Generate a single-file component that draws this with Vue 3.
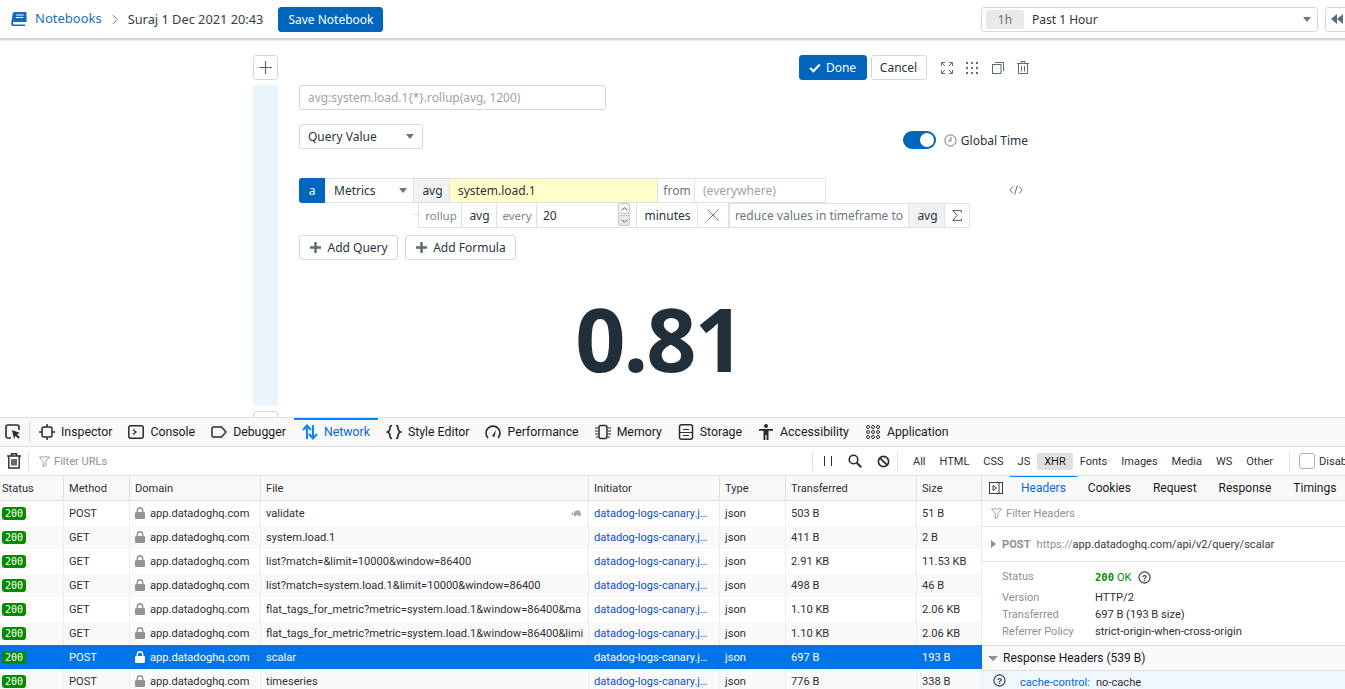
<script setup>
const tabs = [
  { name: 'Inspector', icon: 'inspector' },
  { name: 'Console', icon: 'console' },
  { name: 'Debugger', icon: 'debugger' },
  { name: 'Network', icon: 'network', active: true },
  { name: 'Style Editor', icon: 'style' },
  { name: 'Performance', icon: 'perf' },
  { name: 'Memory', icon: 'memory' },
  { name: 'Storage', icon: 'storage' },
  { name: 'Accessibility', icon: 'a11y' },
  { name: 'Application', icon: 'app' },
]
const filters = ['All', 'HTML', 'CSS', 'JS', 'XHR', 'Fonts', 'Images', 'Media', 'WS', 'Other']
const cols = ['Status', 'Method', 'Domain', 'File', 'Initiator', 'Type', 'Transferred', 'Size']
const rows = [
  { m: 'POST', f: 'validate', t: '503 B', s: '51 B', slow: true },
  { m: 'GET', f: 'system.load.1', t: '411 B', s: '2 B' },
  { m: 'GET', f: 'list?match=&limit=10000&window=86400', t: '2.91 KB', s: '11.53 KB' },
  { m: 'GET', f: 'list?match=system.load.1&limit=10000&window=86400', t: '498 B', s: '46 B' },
  { m: 'GET', f: 'flat_tags_for_metric?metric=system.load.1&window=86400&ma', t: '1.10 KB', s: '2.06 KB' },
  { m: 'GET', f: 'flat_tags_for_metric?metric=system.load.1&window=86400&limi', t: '1.10 KB', s: '2.06 KB' },
  { m: 'POST', f: 'scalar', t: '697 B', s: '193 B', sel: true },
  { m: 'POST', f: 'timeseries', t: '776 B', s: '338 B' },
]
const detailTabs = ['Headers', 'Cookies', 'Request', 'Response', 'Timings']
const facts = [
  ['Version', 'HTTP/2'],
  ['Transferred', '697 B (193 B size)'],
  ['Referrer Policy', 'strict-origin-when-cross-origin'],
]
</script>

<template>
  <div class="page">
    <header class="topbar">
      <svg class="book" viewBox="0 0 16 14" width="16" height="14"><path d="M4 0h11.500v10H3.500c-.9 0-1.400.5-1.500 1.200-.1.700.5 1.300 1.300 1.300H14V14H2.500C1 14 0 13 .2 11.400L1.600 2C1.800.8 2.800 0 4 0z" fill="#1768b8"/><path d="M5.200 3h7.500M4.800 5.500h7.500" stroke="#fff" stroke-width="1"/></svg>
      <a class="crumb">Notebooks</a>
      <svg class="chev" viewBox="0 0 8 12" width="7" height="11"><path d="M1 1l5 5-5 5" fill="none" stroke="#6b7a85" stroke-width="1.100"/></svg>
      <span class="title">Suraj 1 Dec 2021 20:43</span>
      <button class="btn primary save">Save Notebook</button>
      <div class="timepick">
        <span class="pill">1h</span>
        <span class="tp-label">Past 1 Hour</span>
        <span class="caret"></span>
      </div>
      <button class="btn rewind"><svg viewBox="0 0 14 10" width="14" height="10"><path d="M7 0v10L1 5zM13 0v10L7 5z" fill="#5d6b75"/></svg></button>
    </header>

    <main class="canvas">
      <div class="rail">
        <button class="btn square"><svg viewBox="0 0 13 13" width="13" height="13"><path d="M6.500 0v13M0 6.500h13" stroke="#5d6b75" stroke-width="1.200"/></svg></button>
        <div class="railbar"></div>
        <button class="btn square"></button>
      </div>
      <div class="cell">
        <div class="cell-actions">
          <button class="btn primary done"><svg viewBox="0 0 12 10" width="12" height="10"><path d="M1.200 5l3.200 3.200L10.800 1.500" fill="none" stroke="#fff" stroke-width="2.200"/></svg>Done</button>
          <button class="btn cancel">Cancel</button>
          <div class="tools">
            <svg viewBox="0 0 12 12" width="12" height="12"><path d="M.5 4V.5H4M1 1l3 3M8 .5h3.500V4M11 1L8 4M.5 8v3.500H4M1 11l3-3M8 11.500h3.500V8M11 11L8 8" fill="none" stroke="#5d6b75"/></svg>
            <svg viewBox="0 0 12 12" width="12" height="12" fill="#5d6b75"><rect x="0" y="0" width="2" height="2"/><rect x="5" y="0" width="2" height="2"/><rect x="10" y="0" width="2" height="2"/><rect x="0" y="5" width="2" height="2"/><rect x="5" y="5" width="2" height="2"/><rect x="10" y="5" width="2" height="2"/><rect x="0" y="10" width="2" height="2"/><rect x="5" y="10" width="2" height="2"/><rect x="10" y="10" width="2" height="2"/></svg>
            <svg viewBox="0 0 12 12" width="12" height="12"><rect x=".5" y="2.500" width="8.500" height="9" fill="none" stroke="#5d6b75"/><path d="M3 .5h8.500V9" fill="none" stroke="#5d6b75"/></svg>
            <svg viewBox="0 0 12 13" width="12" height="13"><path d="M0 2.500h12M4 2V.5h4V2M1.500 3v9.500h9V3M4.500 5v5.500M7.500 5v5.500" fill="none" stroke="#5d6b75"/></svg>
          </div>
        </div>
        <div class="query-text">avg:system.load.1{*}.rollup(avg, 1200)</div>
        <div class="viz-row">
          <div class="viz-select">Query Value<span class="caret"></span></div>
          <div class="global">
            <span class="toggle"><span class="knob"></span></span>
            <svg viewBox="0 0 14 14" width="13" height="13"><circle cx="7" cy="7" r="6" fill="none" stroke="#5d6b75"/><path d="M7.500 3.500V7.500H4.500" fill="none" stroke="#5d6b75"/></svg>
            <span>Global Time</span>
          </div>
        </div>
        <div class="q-line">
          <span class="q-a">a</span>
          <span class="q-src">Metrics<span class="caret"></span></span>
          <span class="q-avg">avg</span>
          <span class="q-metric">system.load.1</span>
          <span class="q-from">from</span>
          <span class="q-where">(everywhere)</span>
          <svg class="q-code" viewBox="0 0 14 10" width="14" height="10"><path d="M4 1.500L.8 5 4 8.500M10 1.500L13.200 5 10 8.500M8.300 .5L5.700 9.500" fill="none" stroke="#5d6b75"/></svg>
        </div>
        <div class="f-line">
          <span class="f-dash"></span>
          <span class="f-box rollup"><span class="f-key">rollup</span></span>
          <span class="f-box f-avg">avg</span>
          <span class="f-box f-every"><span class="f-key">every</span></span>
          <span class="f-box f-num">20
            <span class="spin"><i><svg viewBox="0 0 8 5" width="7" height="4"><path d="M.5 4L4 1l3.500 3" fill="none" stroke="#444"/></svg></i><i class="down"><svg viewBox="0 0 8 5" width="7" height="4"><path d="M.5 1L4 4l3.500-3" fill="none" stroke="#444"/></svg></i></span>
          </span>
          <span class="f-box f-min">minutes</span>
          <span class="f-box f-x"><svg viewBox="0 0 12 12" width="12" height="12"><path d="M.5.5l11 11M11.500.5l-11 11" stroke="#6b7a85"/></svg></span>
          <span class="f-box f-reduce">reduce values in timeframe to</span>
          <span class="f-box f-avg2">avg</span>
          <span class="f-box f-sigma"><svg viewBox="0 0 10 11" width="10" height="11"><path d="M9.500 2.500V.6H.8L5.200 5.500.8 10.400h8.700V8.500" fill="none" stroke="#4f5d67"/></svg></span>
        </div>
        <div class="add-row">
          <button class="btn add"><svg viewBox="0 0 11 11" width="11" height="11"><path d="M5.500 0v11M0 5.500h11" stroke="#5d6b75" stroke-width="2.400"/></svg>Add Query</button>
          <button class="btn add"><svg viewBox="0 0 11 11" width="11" height="11"><path d="M5.500 0v11M0 5.500h11" stroke="#5d6b75" stroke-width="2.400"/></svg>Add Formula</button>
        </div>
        <div class="big">0.81</div>
      </div>
    </main>

    <section class="devtools">
      <nav class="dt-tabs">
        <span class="picker">
          <svg viewBox="0 0 16 16" width="16" height="16"><path d="M6 14H3a2 2 0 0 1-2-2V3a2 2 0 0 1 2-2h9a2 2 0 0 1 2 2v3" fill="none" stroke="#2b2b30" stroke-width="1.600"/><path d="M7 6l8 3-3 1.300 2.800 3-1.500 1.500-2.800-3L9 15z" fill="#2b2b30"/></svg>
        </span>
        <div v-for="t in tabs" :key="t.name" class="dt-tab" :class="{ on: t.active }">
          <svg viewBox="0 0 16 16" width="16" height="16" class="dt-ico">
            <template v-if="t.icon === 'inspector'"><rect x="3" y="3" width="10" height="10" rx="2" fill="none" stroke="currentColor" stroke-width="1.500"/><path d="M8 0v3M8 13v3M0 8h3M13 8h3" stroke="currentColor" stroke-width="1.500"/></template>
            <template v-else-if="t.icon === 'console'"><rect x=".8" y="1.800" width="14.400" height="12.400" rx="2" fill="none" stroke="currentColor" stroke-width="1.500"/><path d="M5 5.500L8 8l-3 2.500" fill="none" stroke="currentColor" stroke-width="1.200"/></template>
            <template v-else-if="t.icon === 'debugger'"><path d="M2.500 3h8l4.500 5-4.500 5h-8A1.500 1.500 0 0 1 1 11.500v-7A1.500 1.500 0 0 1 2.500 3z" fill="none" stroke="currentColor" stroke-width="1.500"/></template>
            <template v-else-if="t.icon === 'network'"><path d="M5 15V2M1 6l4-4.500L9 6M11 1v13M7 10l4 4.500 4-4.500" fill="none" stroke="#0a84ff" stroke-width="2"/></template>
            <template v-else-if="t.icon === 'style'"><path d="M6 1.500c-2 0-2 1-2 2.500s0 3-2.500 4C4 9 4 10.500 4 12s0 2.500 2 2.500M10 1.500c2 0 2 1 2 2.500s0 3 2.500 4C12 9 12 10.500 12 12s0 2.500-2 2.500" fill="none" stroke="currentColor" stroke-width="1.600"/></template>
            <template v-else-if="t.icon === 'perf'"><path d="M3 14A7 7 0 1 1 13 14" fill="none" stroke="currentColor" stroke-width="1.600"/><path d="M7 12l4-6-1.500 7z" fill="currentColor"/></template>
            <template v-else-if="t.icon === 'memory'"><rect x="4" y="1.500" width="8" height="13" rx="2" fill="none" stroke="currentColor" stroke-width="1.500"/><path d="M0 4h3M0 7h3M0 10h3M1 13h2M13 4h3M13 7h3M13 10h3M13 13h2" stroke="currentColor"/></template>
            <template v-else-if="t.icon === 'storage'"><rect x="1.500" y=".8" width="13" height="14.400" rx="2" fill="none" stroke="currentColor" stroke-width="1.500"/><path d="M5 5.500h6M1.500 8.500h13M5 11.500h6" stroke="currentColor" stroke-width="1.200"/></template>
            <template v-else-if="t.icon === 'a11y'"><circle cx="8" cy="2" r="2" fill="currentColor"/><path d="M1 5h14v1.800h-4.500V16H8.600v-5H7.400v5H5.500V6.800H1z" fill="currentColor"/></template>
            <template v-else><g fill="none" stroke="currentColor"><circle cx="3" cy="3" r="1.500"/><circle cx="8" cy="3" r="1.500"/><circle cx="13" cy="3" r="1.500"/><circle cx="3" cy="8" r="1.500"/><circle cx="8" cy="8" r="1.500"/><circle cx="13" cy="8" r="1.500"/><circle cx="3" cy="13" r="1.500"/><circle cx="8" cy="13" r="1.500"/><circle cx="13" cy="13" r="1.500"/></g></template>
          </svg>
          <span>{{ t.name }}</span>
        </div>
      </nav>

      <div class="dt-filter">
        <span class="trash">
          <svg viewBox="0 0 14 16" width="14" height="16"><path d="M0 3h14M4.500 2.500V.8h5v1.700M1.800 3.500V15h10.400V3.500M5 6v6.500M7 6v6.500M9 6v6.500" fill="none" stroke="#2b2b30" stroke-width="1.400"/></svg>
        </span>
        <div class="url-filter">
          <svg viewBox="0 0 12 12" width="11" height="11"><path d="M.5 1h11L7.500 6v4.500l-3 1V6z" fill="none" stroke="#9a9aa0"/></svg>
          <span>Filter URLs</span>
        </div>
        <div class="dt-actions">
          <svg viewBox="0 0 10 10" width="10" height="10"><path d="M1.500 0v10M8.500 0v10" stroke="#2b2b30"/></svg>
          <svg viewBox="0 0 14 14" width="14" height="14"><circle cx="5.500" cy="5.500" r="4.300" fill="none" stroke="#2b2b30" stroke-width="1.600"/><path d="M8.800 8.800L13.200 13.200" stroke="#2b2b30" stroke-width="2"/></svg>
          <svg viewBox="0 0 14 14" width="13" height="13"><circle cx="7" cy="7" r="5.500" fill="none" stroke="#2b2b30" stroke-width="1.800"/><path d="M3 3l8 8" stroke="#2b2b30" stroke-width="1.800"/></svg>
        </div>
        <div class="types">
          <span v-for="f in filters" :key="f" class="type" :class="{ on: f === 'XHR' }">{{ f }}</span>
        </div>
        <div class="persist"><span class="check"></span><span>Disab</span></div>
      </div>

      <div class="dt-body">
        <div class="table">
          <div class="tr head">
            <div v-for="c in cols" :key="c" class="td">{{ c }}</div>
          </div>
          <div v-for="(r, i) in rows" :key="i" class="tr" :class="{ alt: i % 2 === 1, sel: r.sel }">
            <div class="td status"><span class="code">200</span></div>
            <div class="td">{{ r.m }}</div>
            <div class="td dom">
              <svg viewBox="0 0 10 12" width="10" height="12"><path d="M2.300 5.500V3.500a2.700 2.700 0 0 1 5.400 0v2" fill="none" stroke="currentColor" stroke-width="1.400"/><rect x="0" y="5" width="10" height="7" rx="1.200" fill="currentColor"/></svg>
              <span>app.datadoghq.com</span>
            </div>
            <div class="td file">
              <span class="file-name">{{ r.f }}</span>
              <svg v-if="r.slow" class="turtle" viewBox="0 0 13 8" width="12" height="8"><path d="M2.500 6.500C3 2.500 5 1 7.200 1c2.200 0 3.500 2 3.800 5.500zM.3 4.600c.3-.9 1-1.300 2-1L2.400 5.800c-1 .2-1.800-.3-2.100-1.200zM3.500 6.500h1.500v1.300H3.500zM8.500 6.500H10v1.300H8.500z" fill="#a6a6ab"/></svg>
            </div>
            <div class="td init">datadog-logs-canary.j…</div>
            <div class="td">json</div>
            <div class="td">{{ r.t }}</div>
            <div class="td">{{ r.s }}</div>
          </div>
        </div>

        <aside class="details">
          <div class="d-tabs">
            <span class="d-toggle"><svg viewBox="0 0 14 12" width="14" height="12"><rect x=".5" y=".5" width="13" height="11" fill="none" stroke="#3a3a40"/><path d="M10 .5v11" stroke="#3a3a40"/><path d="M4 3.500L7.500 6 4 8.500z" fill="none" stroke="#3a3a40"/></svg></span>
            <span v-for="t in detailTabs" :key="t" class="d-tab" :class="{ on: t === 'Headers' }">{{ t }}</span>
          </div>
          <div class="d-filter">
            <svg viewBox="0 0 12 12" width="11" height="11"><path d="M.5 1h11L7.500 6v4.500l-3 1V6z" fill="none" stroke="#9a9aa0"/></svg>
            <span>Filter Headers</span>
          </div>
          <div class="d-url">
            <span class="tri"></span>
            <b>POST</b>
            <span class="d-href">https://<span>app.datadoghq.com/api/v2/query/scalar</span></span>
          </div>
          <div class="d-facts">
            <div class="fact first"><span class="k">Status</span><span class="v ok"><b>200</b> OK
              <svg viewBox="0 0 14 14" width="13" height="13"><circle cx="7" cy="7" r="6" fill="none" stroke="#38383d" stroke-width="1.200"/><text x="7" y="10.500" text-anchor="middle" font-size="9" font-weight="700" fill="#38383d" font-family="Liberation Sans, sans-serif">?</text></svg></span></div>
            <div v-for="f in facts" :key="f[0]" class="fact"><span class="k">{{ f[0] }}</span><span class="v">{{ f[1] }}</span></div>
          </div>
          <div class="d-section"><span class="tri down"></span>Response Headers (539 B)</div>
          <div class="d-header">
            <svg viewBox="0 0 14 14" width="13" height="13"><circle cx="7" cy="7" r="6" fill="none" stroke="#38383d" stroke-width="1.200"/><text x="7" y="10.500" text-anchor="middle" font-size="9" font-weight="700" fill="#38383d" font-family="Liberation Sans, sans-serif">?</text></svg>
            <span class="h-k">cache-control:</span><span class="h-v">no-cache</span>
          </div>
        </aside>
      </div>
    </section>
  </div>
</template>

<style>
html, body { margin: 0; overflow: hidden; background: #fff; }
</style>

<style scoped>
.page { width: 1345px; height: 689px; overflow: hidden; display: flex; flex-direction: column; font-family: "Noto Sans", sans-serif; font-size: 12px; color: #28353e; }
button { font-family: inherit; font-size: inherit; }
.btn { height: 25px; border: 1px solid #d3d8dc; background: #fff; border-radius: 3px; padding: 0; color: #28353e; display: inline-flex; align-items: center; justify-content: center; box-sizing: border-box; flex: none; }
.btn.primary { background: #0065bd; border-color: #0065bd; color: #fff; }

.topbar { height: 40px; box-sizing: border-box; flex: none; display: flex; align-items: center; border-bottom: 2px solid #d2d2d2; padding-left: 11px; box-shadow: 0 1px 1px #eee; position: relative; }
.book { flex: none; margin-right: 8px; }
.crumb { color: #1b6fc1; font-size: 13px; margin-top: -3px; }
.chev { margin: 0 9px 0 10px; }
.title { font-size: 12.800px; color: #333f48; }
.save { width: 105px; margin-left: 15px; }
.timepick { margin-left: auto; width: 337px; height: 25px; box-sizing: border-box; border: 1px solid #d3d8dc; border-radius: 3px; display: flex; align-items: center; padding: 0 5px 0 4px; }
.pill { width: 38px; height: 19px; background: #e7e9eb; border-radius: 3px; color: #69757e; text-align: center; line-height: 19px; }
.tp-label { margin-left: 8px; }
.caret { width: 0; height: 0; border: 4.500px solid transparent; border-top: 5px solid #6b7680; border-bottom: 0; margin-left: auto; margin-right: 1px; }
.rewind { width: 30px; margin: 0 -10px 0 7px; justify-content: flex-start; padding-left: 4px; }

.canvas { height: 377px; flex: none; display: flex; padding: 15px 0 0 253px; box-sizing: border-box; overflow: hidden; }
.rail { width: 25px; flex: none; display: flex; flex-direction: column; gap: 5px; }
.square { width: 25px; }
.railbar { height: 321px; background: #eaf4fb; border-radius: 2px; flex: none; }
.cell { width: 731px; margin-left: 21px; flex: none; }
.cell-actions { display: flex; justify-content: flex-end; height: 25px; padding-right: 1px; }
.done { width: 68px; gap: 5px; }
.cancel { width: 56px; margin-left: 4px; }
.tools { display: flex; align-items: center; gap: 13.500px; margin-left: 14px; color: #5d6b75; }
.query-text { margin-top: 5px; width: 307px; height: 25px; box-sizing: border-box; border: 1px solid #d3d8dc; border-radius: 3px; padding-left: 8px; line-height: 23px; color: #9aa3aa; font-size: 11.900px; }
.viz-row { margin-top: 14px; display: flex; justify-content: space-between; align-items: flex-start; }
.viz-select { width: 124px; height: 25px; box-sizing: border-box; border: 1px solid #d3d8dc; border-radius: 3px; display: flex; align-items: center; padding: 0 7px 0 8px; }
.global { display: flex; align-items: center; margin-top: 7px; height: 18px; padding-right: 2px; }
.global svg { margin: 0 4px 0 8px; }
.toggle { width: 33px; height: 18px; border-radius: 9px; background: #0065bd; display: flex; justify-content: flex-end; align-items: center; padding-right: 2px; box-sizing: border-box; }
.knob { width: 14px; height: 14px; border-radius: 50%; background: #fff; }

.q-line { margin-top: 29px; height: 25px; display: flex; position: relative; }
.q-line > span { box-sizing: border-box; height: 25px; line-height: 23px; border: 1px solid #dde1e4; border-left: 0; }
.q-a { width: 26px; background: #0065bd; border: 0 !important; color: #fff; text-align: center; border-radius: 3px 0 0 3px; line-height: 25px !important; }
.q-src { width: 89px; display: flex; align-items: center; padding: 0 5px 0 9px; }
.q-avg { width: 36px; background: #f1f2f3; text-align: center; padding-left: 2px; }
.q-metric { width: 208px; background: #ffffc9; padding-left: 8px; }
.q-from { width: 37px; text-align: center; color: #6b7680; padding-left: 2px; }
.q-where { width: 131px; padding-left: 8px; color: #9aa3aa; }
.q-code { position: absolute; right: 7px; top: 7px; }

.f-line { margin-left: 114px; height: 25px; display: flex; align-items: flex-start; }
.f-dash { width: 5px; height: 1px; background: #dde1e4; margin-top: 11px; flex: none; }
.f-box { box-sizing: border-box; height: 25px; line-height: 25px; border: 1px solid #dde1e4; border-left: 0; border-top: 0; flex: none; display: block; }
.f-key { color: #7d8890; font-size: 11.500px; }
.rollup { width: 44px; border-left: 1px solid #dde1e4; text-align: center; padding-left: 2px; }
.f-avg { width: 35px; text-align: center; padding-left: 1px; }
.f-every { width: 40px; text-align: center; padding-left: 1px; }
.f-num { width: 100px; padding-left: 6px; position: relative; }
.spin { position: absolute; right: 6px; top: 0; display: flex; flex-direction: column; gap: 1px; }
.spin i { width: 12px; height: 11px; border: 1px solid #c4c9cd; box-sizing: border-box; border-radius: 2px 2px 0 0; background: #f4f4f4; display: flex; align-items: center; justify-content: center; }
.spin i.down { border-radius: 0 0 2px 2px; background: #e9e9e9; }
.f-min { width: 61px; text-align: center; padding-left: 1px; }
.f-x { width: 31px; display: flex; align-items: center; justify-content: center; }
.f-reduce { width: 180px; text-align: center; color: #6b7680; border-top: 1px solid #dde1e4; border-left: 1px solid #dde1e4; line-height: 23px; }
.f-avg2 { width: 36px; background: #f1f2f3; text-align: center; border-top: 1px solid #dde1e4; line-height: 23px; padding-left: 2px; }
.f-sigma { width: 25px; display: flex; align-items: center; justify-content: center; border-top: 1px solid #dde1e4; border-radius: 0 3px 3px 0; }
.add-row { margin-top: 7px; display: flex; gap: 7px; }
.add { padding: 0 9px 0 10px; gap: 6.500px; }
.big { height: 100px; margin-top: 28px; line-height: 100px; font-size: 88px; font-weight: 700; letter-spacing: -2px; text-align: center; padding-right: 11px; color: #212f3a; }

.devtools { flex: 1; min-height: 0; border-top: 1px solid #e0e0e2; font-family: Roboto, sans-serif; font-size: 11.100px; color: #2f2f33; background: #fff; display: flex; flex-direction: column; }
.dt-tabs { height: 29px; box-sizing: border-box; background: #f9f9fa; border-bottom: 1px solid #e0e0e2; display: flex; align-items: stretch; flex: none; font-size: 12.300px; }
.picker { width: 30px; flex: none; box-sizing: border-box; padding-left: 5px; display: flex; align-items: center; border-right: 1px solid #e0e0e2; margin: 4px 0; }
.dt-tab { display: flex; align-items: center; gap: 6px; padding: 0 8px; color: #18181a; position: relative; flex: none; }
.dt-tabs .picker + .dt-tab { margin-left: 1px; }
.dt-ico { color: #2b2b30; flex: none; }
.dt-tab.on { color: #0a68d4; box-shadow: inset 0 2px 0 #0a84ff; }

.dt-filter { height: 29px; box-sizing: border-box; flex: none; display: flex; align-items: center; border-bottom: 1px solid #e0e0e2; }
.trash { width: 29px; box-sizing: border-box; padding-left: 7px; border-right: 1px solid #e0e0e2; height: 20px; display: flex; align-items: center; flex: none; }
.url-filter { flex: 1; display: flex; align-items: center; gap: 4px; padding-left: 10px; color: #8f8f95; }
.dt-actions { width: 86px; height: 20px; flex: none; box-sizing: border-box; border-left: 1px solid #e0e0e2; border-right: 1px solid #e0e0e2; display: flex; align-items: center; gap: 15px; padding-left: 10px; }
.types { display: flex; align-items: center; width: 376px; margin-left: 8px; flex: none; font-size: 11px; }
.type { padding: 2px 7px; border-radius: 2px; color: #2f2f33; }
.type.on { background: #e0e0e2; color: #18181a; }
.persist { margin-left: 7px; width: 46px; height: 20px; padding-left: 9px; border-left: 1px solid #e0e0e2; display: flex; align-items: center; gap: 4px; flex: none; white-space: nowrap; overflow: hidden; box-sizing: content-box; }
.check { width: 14px; height: 14px; border: 1px solid #b1b1b3; border-radius: 3px; flex: none; }

.dt-body { flex: 1; min-height: 0; display: flex; }
.table { width: 982px; flex: none; }
.tr { display: grid; grid-template-columns: 64px 66px 131px 328px 131px 66px 131px 65px; height: 24px; align-items: center; }
.tr.alt { background: #f9f9fa; }
.tr.head { height: 25px; border-bottom: 1px solid #e0e0e2; box-sizing: border-box; background: #f9f9fa; }
.tr.head .td { height: 24px; line-height: 25px; border-right: 1px solid #e0e0e2; }
.tr.head .td:first-child { padding-left: 2px; }
.tr.sel { background: #0074e8; color: #fff; }
.td { box-sizing: border-box; height: 24px; line-height: 25px; padding: 0 5px; white-space: nowrap; overflow: hidden; border-right: 1px solid #ededf0; }
.tr.sel .td { border-right-color: #0074e8; }
.status { padding-left: 2px; display: flex; align-items: center; }
.code { width: 24px; height: 13px; background: #058b00; border-radius: 3px; color: #fff; font-family: "DejaVu Sans Mono", monospace; font-size: 10px; line-height: 13px; text-align: center; font-weight: 400; }
.dom { display: flex; align-items: center; gap: 5px; }
.dom svg { color: #929297; flex: none; }
.tr.sel .dom svg { color: #fff; }
.file { position: relative; }
.file-name { display: block; overflow: hidden; }
.turtle { position: absolute; right: 5px; top: 8px; }
.init { color: #0a4fc4; }
.tr.sel .init { color: #fff; }

.details { flex: 1; min-width: 0; display: flex; flex-direction: column; overflow: hidden; }
.d-tabs { height: 25px; box-sizing: border-box; flex: none; display: flex; align-items: center; border-bottom: 1px solid #e0e0e2; background: #f9f9fa; white-space: nowrap; position: relative; }
.d-toggle { width: 28px; display: flex; padding-left: 7px; box-sizing: border-box; flex: none; }
.d-tab { padding: 0 11px; height: 24px; line-height: 25px; color: #18181a; flex: none; font-size: 12px; }
.d-tab.on { color: #0a68d4; box-shadow: 0 -1px 0 0 #0a84ff, inset 0 1px 0 #0a84ff; }
.d-filter { height: 26px; box-sizing: border-box; flex: none; border-bottom: 1px solid #e0e0e2; display: flex; align-items: center; gap: 4px; padding-left: 9px; color: #8f8f95; }
.d-url { height: 35px; box-sizing: border-box; flex: none; border-bottom: 1px solid #e0e0e2; display: flex; align-items: center; padding-left: 9px; gap: 6px; color: #8f8f95; }
.tri { width: 0; height: 0; border: 4px solid transparent; border-left: 5px solid #8f8f95; border-right: 0; }
.tri.down { border: 5px solid transparent; border-top: 5px solid #8f8f95; border-bottom: 0; margin: 0 5px 0 6px; }
.d-url b { color: #8f8f95; }
.d-href span { color: #38383d; }
.d-facts { height: 84px; flex: none; box-sizing: border-box; padding: 6px 0 0 20px; border-bottom: 1px solid #e0e0e2; }
.fact { display: flex; height: 17px; line-height: 17px; }
.fact.first { height: 21px; line-height: 17px; }
.k { width: 93px; color: #8f8f95; flex: none; }
.v { display: flex; align-items: center; gap: 3px; height: 17px; }
.ok { color: #058b00; height: 18px; }
.ok svg { margin-left: 3px; }
.ok b { font-family: "DejaVu Sans Mono", monospace; font-size: 10.500px; }
.d-section { height: 25px; box-sizing: border-box; flex: none; display: flex; align-items: center; background: #f9f9fa; border-bottom: 1px solid #e0e0e2; color: #18181a; font-size: 12px; }
.d-header { flex: none; background: #eff6fc; display: flex; align-items: center; padding-left: 11px; height: 22px; }
.d-header svg { margin-top: -3px; }
.h-k { color: #0a68d4; margin-left: 14px; }
.h-v { margin-left: 6px; }
</style>
